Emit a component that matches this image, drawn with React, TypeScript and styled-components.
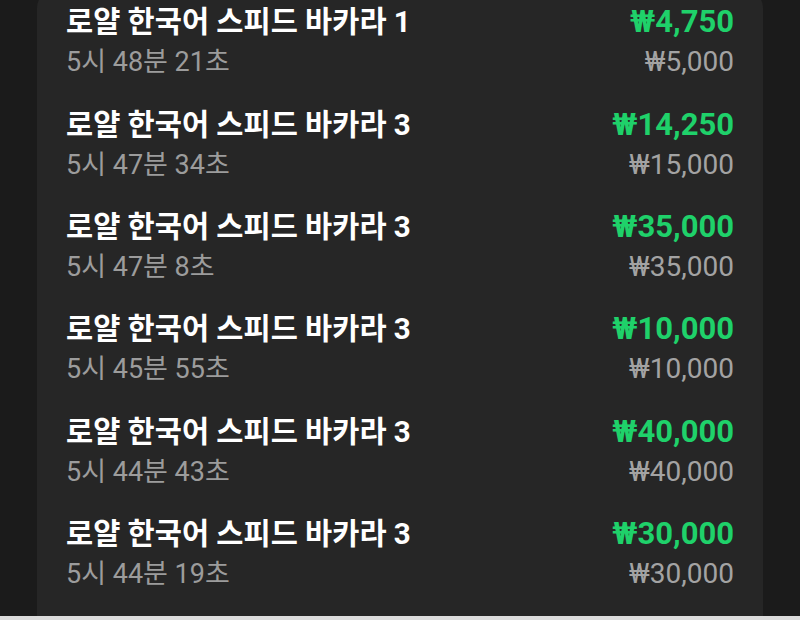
import React from "react";
import styled, { createGlobalStyle } from "styled-components";

const Global = createGlobalStyle`
  html, body { margin: 0; padding: 0; background: #1b1b1b; }
  body { font-family: "Roboto", "Noto Sans CJK KR", sans-serif; }
`;

const Screen = styled.div`
  width: 800px;
  height: 620px;
  display: flex;
  flex-direction: column;
  overflow: hidden;
  background: #1b1b1b;
`;

const Viewport = styled.div`
  flex: 1;
  overflow: hidden;
  padding: 0 37px;
`;

const Card = styled.div`
  background: #262626;
  border-radius: 18px 18px 0 0;
  margin-top: -10px;
  padding: 1px 29px 0;
  height: calc(100% + 10px);
  box-sizing: border-box;
`;

const List = styled.ul`
  list-style: none;
  margin: 0;
  padding: 0;
`;

const Row = styled.li`
  display: flex;
  justify-content: space-between;
  align-items: flex-start;
  padding: 11.2px 0;
`;

const Col = styled.div<{ $align: "left" | "right" }>`
  display: flex;
  flex-direction: column;
  align-items: ${(p) => (p.$align === "right" ? "flex-end" : "flex-start")};
`;

const Title = styled.div`
  font-family: "Roboto", "Noto Sans CJK KR", sans-serif;
  font-weight: 700;
  font-size: 29.5px;
  line-height: 40px;
  color: #ffffff;
`;

const Time = styled.div`
  font-family: "Roboto", "Noto Sans CJK KR", sans-serif;
  font-size: 27px;
  line-height: 40px;
  color: #9c9c9c;
`;

const Amount = styled.div`
  font-family: "Roboto", "Noto Sans CJK KR", sans-serif;
  font-weight: 700;
  font-size: 31px;
  line-height: 40px;
  color: #1fd16a;
`;

const Stake = styled.div`
  font-family: "Roboto", "Noto Sans CJK KR", sans-serif;
  font-size: 28px;
  line-height: 40px;
  color: #a3a3a3;
`;

const BottomBar = styled.div`
  height: 4px;
  background: #dcdcdc;
`;

type Bet = { game: string; time: string; win: string; stake: string };

const bets: Bet[] = [
  { game: "로얄 한국어 스피드 바카라 1", time: "5시 48분 21초", win: "₩4,750", stake: "₩5,000" },
  { game: "로얄 한국어 스피드 바카라 3", time: "5시 47분 34초", win: "₩14,250", stake: "₩15,000" },
  { game: "로얄 한국어 스피드 바카라 3", time: "5시 47분 8초", win: "₩35,000", stake: "₩35,000" },
  { game: "로얄 한국어 스피드 바카라 3", time: "5시 45분 55초", win: "₩10,000", stake: "₩10,000" },
  { game: "로얄 한국어 스피드 바카라 3", time: "5시 44분 43초", win: "₩40,000", stake: "₩40,000" },
  { game: "로얄 한국어 스피드 바카라 3", time: "5시 44분 19초", win: "₩30,000", stake: "₩30,000" },
];

export default function App() {
  return (
    <Screen>
      <Global />
      <Viewport>
        <Card>
          <List>
            {bets.map((b, i) => (
              <Row key={i}>
                <Col $align="left">
                  <Title>{b.game}</Title>
                  <Time>{b.time}</Time>
                </Col>
                <Col $align="right">
                  <Amount>{b.win}</Amount>
                  <Stake>{b.stake}</Stake>
                </Col>
              </Row>
            ))}
          </List>
        </Card>
      </Viewport>
      <BottomBar />
    </Screen>
  );
}
